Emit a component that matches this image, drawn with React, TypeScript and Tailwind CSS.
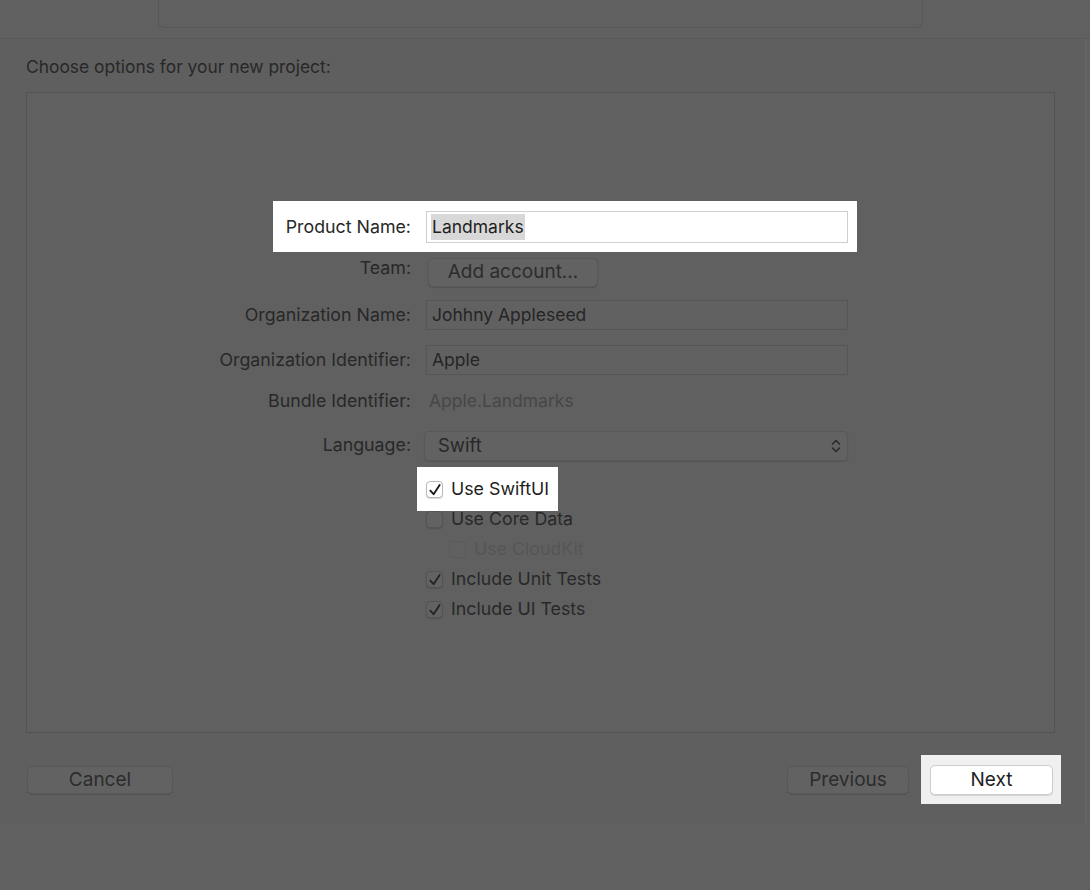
import type {ReactNode} from 'react';

const font = {fontFamily: 'Inter, "Noto Sans", sans-serif'};

function Check({on, white, dim}: {on?: boolean; white?: boolean; dim?: boolean}) {
  return (
    <span
      className={
        'flex h-[17px] w-[17px] flex-none items-center justify-center rounded-[4px] border ' +
        (white
          ? 'border-[#b9b9b9] bg-white shadow-[0_1px_1px_rgba(0,0,0,0.15)]'
          : dim
            ? 'border-[#5a5a5a] bg-[#606060]'
            : 'border-[#545454] bg-[#626262] shadow-[0_1px_1px_rgba(0,0,0,0.12)]')
      }
    >
      {on && (
        <svg viewBox="0 0 12 12" className="h-[14px] w-[14px]">
          <path
            d="M2 6.5 L4.8 9.6 L10 1.8"
            fill="none"
            stroke={white ? '#1a1a1a' : '#242424'}
            strokeWidth="1.6"
            strokeLinecap="round"
            strokeLinejoin="round"
          />
        </svg>
      )}
    </span>
  );
}

function Row({label, children, className = '', labelClass = ''}: {label: string; children: ReactNode; className?: string; labelClass?: string}) {
  return (
    <div className={'flex w-[648px] items-center gap-[15px] ' + className}>
      <div className={'w-[211px] text-right text-[17.8px] text-[#282828] ' + labelClass}>{label}</div>
      <div className="w-[422px]">{children}</div>
    </div>
  );
}

function Field({value}: {value: string}) {
  return (
    <div className="flex h-[30px] items-center border border-[#565656] bg-[#616161] px-[5px] text-[17.5px] text-[#252525]">
      {value}
    </div>
  );
}

function Button({children, className = ''}: {children: ReactNode; className?: string}) {
  return (
    <button
      className={
        'flex h-[28px] items-center justify-center rounded-[5px] border border-[#585858] bg-[#626262] text-[19px] text-[#2c2c2c] shadow-[0_1px_1px_rgba(0,0,0,0.15)] ' +
        className
      }
    >
      {children}
    </button>
  );
}

function CheckRow({label, on, indent, white, dim}: {label: string; on?: boolean; indent?: boolean; white?: boolean; dim?: boolean}) {
  return (
    <div className={'flex h-[30px] items-center ' + (indent ? 'pl-[23px]' : '')}>
      <div className={'relative flex items-center gap-[8px] ' + (white ? 'z-0' : '')}>
        {white && <div className="absolute -bottom-[8px] -left-[9px] -right-[9px] -top-[9px] -z-10 bg-white" />}
        <Check on={on} white={white} dim={dim} />
        <span className={'text-[17.8px] ' + (dim ? 'text-[#565656]' : white ? 'text-[#1e1e1e]' : 'text-[#282828]')}>
          {label}
        </span>
      </div>
    </div>
  );
}

export default function App() {
  return (
    <div className="h-[890px] w-[1090px] bg-[#616161]" style={font}>
      {/* top strip with the template chooser edge */}
      <div className="h-[39px] border-b border-[#585858] bg-[#606060]">
        <div className="ml-[158px] h-[28px] w-[765px] rounded-b-[6px] border border-t-0 border-[#575757]" />
      </div>

      {/* sheet */}
      <div className="h-[784px] w-[1086px] border-r border-[#676767] bg-[#5f5f5f] px-[26px]">
        <div className="flex h-[53px] items-center pt-[3px] text-[17.4px] text-[#282828]">Choose options for your new project:</div>

        <div className="h-[641px] w-[1029px] border border-[#525252] bg-[#606060] pl-[173px] pt-[118px]">
          <Row label="Product Name:" className="relative z-0">
            <div className="absolute -bottom-[9px] -right-[9px] -top-[10px] left-[73px] -z-10 bg-white" />
            <div className="flex h-[32px] items-center border border-[#cfcfcf] bg-white px-[4px] text-[17.5px] text-[#1e1e1e]">
              <span className="bg-[#d8d8d8] px-[1px]">Landmarks</span>
            </div>
          </Row>

          <Row label="Team:" className="mt-[15px]" labelClass="-mt-[8px]">
            <Button className="ml-[2px] h-[29px] w-[170px]">Add account...</Button>
          </Row>

          <Row label="Organization Name:" className="mt-[13px]">
            <Field value="Johhny Appleseed" />
          </Row>

          <Row label="Organization Identifier:" className="mt-[15px]">
            <Field value="Apple" />
          </Row>

          <Row label="Bundle Identifier:" className="mt-[13px]">
            <div className="flex h-[24px] items-center pl-[3px] text-[17.5px] text-[#474747]">Apple.Landmarks</div>
          </Row>

          <Row label="Language:" className="mt-[16px]">
            <div className="-ml-[2px] flex h-[30px] items-center justify-between rounded-[5px] border border-[#585858] bg-[#626262] pl-[13px] pr-[5px] text-[18.5px] text-[#282828] shadow-[0_1px_1px_rgba(0,0,0,0.12)]">
              Swift
              <svg viewBox="0 0 12 20" className="h-[20px] w-[12px]">
                <path d="M2.5 8 L6 4.5 L9.5 8 M2.5 12 L6 15.5 L9.5 12" fill="none" stroke="#2a2a2a" strokeWidth="1.6" strokeLinecap="round" strokeLinejoin="round" />
              </svg>
            </div>
          </Row>

          <div className="ml-[226px] mt-[14px]">
            <CheckRow label="Use SwiftUI" on white />
            <CheckRow label="Use Core Data" />
            <CheckRow label="Use CloudKit" indent dim />
            <CheckRow label="Include Unit Tests" on />
            <CheckRow label="Include UI Tests" on />
          </div>
        </div>

        <div className="mt-[32px] flex items-center">
          <Button className="ml-[1px] w-[146px]">Cancel</Button>
          <div className="flex-1" />
          <Button className="w-[122px]">Previous</Button>
          <div className="relative z-0 ml-[21px] mr-[6px]">
            <div className="absolute -bottom-[9px] -left-[9px] -right-[8px] -top-[10px] -z-10 bg-[#f0f0f0]" />
            <button className="flex h-[30px] w-[123px] items-center justify-center rounded-[5px] border border-[#cdcdcd] bg-white text-[19px] text-[#1e1e1e] shadow-[0_1px_1px_rgba(0,0,0,0.12)]">
              Next
            </button>
          </div>
        </div>
      </div>
    </div>
  );
}
